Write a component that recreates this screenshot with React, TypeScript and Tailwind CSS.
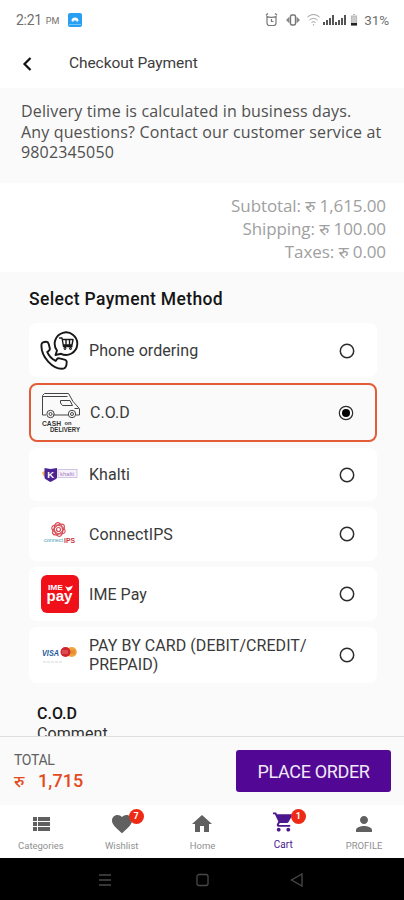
import type { ReactNode } from "react"
import clsx from "clsx"

const TOTALS = ["Subtotal: रु 1,615.00", "Shipping: रु 100.00", "Taxes: रु 0.00"]

function PhoneLogo() {
  return (
    <svg className="shrink-0" width="40" height="40" viewBox="0 0 40 40" fill="none" stroke="#181818" strokeWidth="1.9" strokeLinejoin="round" strokeLinecap="round">
      <path d="M1.500 13.500c0-2 2.500-2.800 5-2.700 1.200 0 1.800.8 2.200 2.200l1.100 4.300c.3 1.300-.3 2-1.200 2.600l-1.400 1c1.600 4 4.500 7 8.500 9l1.200-1.700c.7-.9 1.500-1.200 2.600-.9l5 1.300c1.500.4 2.200 1.200 2.200 2.500 0 2.800-.9 6-3.200 6.500C13 39 .5 25.500 1.500 13.500z" />
      <path d="M17 19.500 15.500 24l5.500-1.200A11.300 11.300 0 1 0 17 19.500z" />
      <path d="M19.500 7H22l1.500 8.500h8.500M22.500 8.500H33l-1 5.500h-8.500M26 8.500V14M29.500 8.500V14" strokeWidth="1.400" />
      <circle cx="25" cy="17.500" r=".5" />
      <circle cx="30.500" cy="17.500" r=".5" />
    </svg>
  )
}

function TruckLogo() {
  return (
    <svg className="shrink-0" width="42" height="42" viewBox="0 0 42 42" fill="none" stroke="#444" strokeWidth="1">
      <path d="M6 23H2.500V3.500L4.500 1.500h24L33 9.500l5 5.500 1.500 2v6H36M13 23h15.500M2.500 4.500h25" />
      <path d="M20.500 8.500h9.500l2.500 5H22.500l-2-2.500zM34.500 16.500h4" />
      <circle cx="10.500" cy="22" r="3.700" />
      <circle cx="10.500" cy="22" r="1.500" />
      <circle cx="32" cy="22" r="3.700" />
      <circle cx="32" cy="22" r="1.500" />
      <g fill="#333" stroke="none" fontFamily="Liberation Sans, sans-serif" fontWeight="700">
        <text x="2" y="33.500" fontSize="7" textLength="19" lengthAdjust="spacingAndGlyphs">CASH</text>
        <text x="24.500" y="33" fontSize="5" textLength="7" lengthAdjust="spacingAndGlyphs">on</text>
        <text x="10" y="40" fontSize="7" textLength="30" lengthAdjust="spacingAndGlyphs">DELIVERY</text>
      </g>
    </svg>
  )
}

function KhaltiLogo() {
  return (
    <svg className="shrink-0" width="38" height="16" viewBox="0 0 38 16">
      <path d="M1 5.500 5 3v7L2.500 9z" fill="#f5b04a" />
      <path d="M3.500 1 9.500 2l6.500-1v9.500c0 1.500-4 3-6.500 4.500-2.500-1.500-6-3-6-4.500z" fill="#4c2496" />
      <text x="6.200" y="10.500" fontSize="9.500" fontWeight="700" fill="#fff" fontFamily="Liberation Sans, sans-serif">K</text>
      <rect x="17" y="2.500" width="19" height="8" fill="#f7f2fb" stroke="#c9b6dc" strokeWidth=".8" />
      <text x="19" y="9" fontSize="6" fill="#a283c3" textLength="14" fontFamily="Liberation Sans, sans-serif">khalti</text>
    </svg>
  )
}

function ConnectIpsLogo() {
  return (
    <svg className="mb-[2px] shrink-0" width="34" height="22" viewBox="0 0 34 22" fill="none">
      <g stroke="#d8515b" strokeWidth="1.200">
        <ellipse cx="15.500" cy="7.500" rx="7" ry="4" transform="rotate(20 15.500 7.500)" />
        <ellipse cx="15.500" cy="7.500" rx="7" ry="4" transform="rotate(80 15.500 7.500)" />
        <ellipse cx="15.500" cy="7.500" rx="7" ry="4" transform="rotate(140 15.500 7.500)" />
        <circle cx="15.500" cy="7.500" r="2" />
      </g>
      <text x="1" y="20" fontSize="5" fill="#4e9dbb" textLength="19" lengthAdjust="spacingAndGlyphs" fontFamily="Liberation Sans, sans-serif">connect</text>
      <text x="21" y="20.500" fontSize="7.500" fontWeight="700" fill="#c9343f" textLength="11" lengthAdjust="spacingAndGlyphs" fontFamily="Liberation Sans, sans-serif">IPS</text>
    </svg>
  )
}

function ImeLogo() {
  return (
    <svg className="shrink-0" width="38" height="38" viewBox="0 0 38 38">
      <rect width="38" height="38" rx="6" fill="#ef1019" />
      <g fill="#fff" fontFamily="Liberation Sans, sans-serif" fontWeight="700">
        <text x="7" y="14.500" fontSize="7" textLength="15" lengthAdjust="spacingAndGlyphs">IME</text>
        <text x="5.500" y="26" fontSize="14" textLength="26" lengthAdjust="spacingAndGlyphs">pay</text>
      </g>
      <path d="m24 11 3 1.500 5-2-2 4-3 2z" fill="#fff" />
    </svg>
  )
}

function CardLogo() {
  return (
    <svg className="shrink-0" width="36" height="20" viewBox="0 0 36 20">
      <text x="0" y="10.500" fontSize="8.500" fontStyle="italic" fontWeight="700" fill="#245a99" textLength="17" lengthAdjust="spacingAndGlyphs" fontFamily="Liberation Sans, sans-serif">VISA</text>
      <circle cx="29.800" cy="7" r="5" fill="#f0a43c" />
      <circle cx="23.500" cy="7" r="5" fill="#d1232e" />
      <path d="M20 6h6M20 8h6" stroke="#ef9b93" strokeWidth=".7" />
      <path d="M28 6h5M28 8h5" stroke="#d95c2b" strokeWidth=".7" />
      <path d="M1 17h20" stroke="#d5d5d5" strokeDasharray="3 1" />
    </svg>
  )
}

function Radio({ checked }: { checked?: boolean }) {
  return (
    <svg width="16" height="16" viewBox="0 0 16 16" fill="none" stroke="#2b2b2b">
      <circle cx="8" cy="8" r="6.700" strokeWidth={checked ? 1.2 : 1.5} />
      {checked && <circle cx="8" cy="8" r="4" fill="#000" stroke="none" />}
    </svg>
  )
}

type Method = { label: string; logo: ReactNode; height: string; pad?: string; selected?: boolean }

const METHODS: Method[] = [
  { label: "Phone ordering", logo: <PhoneLogo />, height: "h-[54px]", pad: "pt-[1px]" },
  { label: "C.O.D", logo: <TruckLogo />, height: "h-[59px]", selected: true },
  { label: "Khalti", logo: <KhaltiLogo />, height: "h-[53px]" },
  { label: "ConnectIPS", logo: <ConnectIpsLogo />, height: "h-[54px]" },
  { label: "IME Pay", logo: <ImeLogo />, height: "h-[54px]" },
  { label: "PAY BY CARD (DEBIT/CREDIT/\nPREPAID)", logo: <CardLogo />, height: "h-[56px]" },
]

function MethodRow({ label, logo, height, pad, selected }: Method) {
  return (
    <div
      className={clsx(
        "flex shrink-0 items-center rounded-lg",
        height,
        pad,
        selected ? "border-2 border-[#e45c37] bg-[#fafafa] pr-[21px] pl-[10px]" : "bg-white pr-[22px] pl-[11px]"
      )}
    >
      <span className="flex w-10 shrink-0 items-center justify-center">{logo}</span>
      <span className="pl-[9px] text-[16px] leading-[19px] tracking-[0.06px] whitespace-pre-line text-[#3a3a3a]">{label}</span>
      <span className="ml-auto">
        <Radio checked={selected} />
      </span>
    </div>
  )
}

const NAV = [
  { label: "Categories", d: "M4 14h4v-4H4v4zm0 5h4v-4H4v4zM4 9h4V5H4v4zm5 5h12v-4H9v4zm0 5h12v-4H9v4zM9 5v4h12V5H9z" },
  { label: "Wishlist", badge: "7", d: "M12 21.350l-1.450-1.320C5.400 15.360 2 12.280 2 8.500 2 5.420 4.420 3 7.500 3c1.740 0 3.410.81 4.500 2.090C13.090 3.810 14.760 3 16.500 3 19.580 3 22 5.420 22 8.500c0 3.780-3.400 6.860-8.550 11.540L12 21.350z" },
  { label: "Home", d: "M10 20v-6h4v6h5v-8h3L12 3 2 12h3v8z" },
  { label: "Cart", badge: "1", active: true, d: "M7 18c-1.100 0-1.990.9-1.990 2S5.900 22 7 22s2-.9 2-2-.9-2-2-2zM1 2v2h2l3.600 7.590-1.350 2.450c-.16.28-.25.61-.25.960 0 1.100.9 2 2 2h12v-2H7.420c-.14 0-.25-.11-.25-.25l.03-.12.9-1.630h7.450c.75 0 1.410-.41 1.750-1.030l3.580-6.490A1 1 0 0 0 20 4H5.210l-.94-2H1zm16 16c-1.100 0-1.990.9-1.990 2s.89 2 1.990 2 2-.9 2-2-.9-2-2-2z" },
  { label: "PROFILE", d: "M12 12c2.210 0 4-1.790 4-4s-1.790-4-4-4-4 1.790-4 4 1.790 4 4 4zm0 2c-2.670 0-8 1.340-8 4v2h16v-2c0-2.660-5.330-4-8-4z" },
]

function StatusIcons() {
  return (
    <svg width="96" height="16" viewBox="0 0 96 16" fill="none" stroke="#777" strokeWidth="1.200">
      {/* alarm */}
      <path d="M2 4.500c1 1.200 7.500 1.200 9 0v6.500c0 1.500-1 2.500-2.500 2.500h-4C3 13.500 2 12.500 2 11zM1 3l2-1.500M12 3l-2-1.500M6.500 7v2.500h2" />
      {/* vibrate */}
      <rect x="25.500" y="3" width="5" height="10" rx="1.500" strokeWidth="1.400" />
      <path d="m24.500 4.500-3.500 3.500 3.500 3.500zM31.500 4.500l3.500 3.500-3.500 3.500z" fill="#888" stroke="none" />
      {/* wifi */}
      <path d="M42.500 5c4-3.200 8-3.200 12 0M44.500 8c2.500-2 5.500-2 8 0M46.500 10.500c1.500-1 2.500-1 4 0" stroke="#999" strokeWidth="1" />
      <circle cx="48.500" cy="12.800" r=".6" fill="#777" stroke="none" />
      {/* both sims */}
      <path d="M59 13v-3M62 13V8M65 13V6M68 13V3M71 13v-3M74 13V8M77 13V6M80 13V3" stroke="#555" strokeWidth="2" />
      <path d="M86.500 4h5v9h-5zM88 2.500h2" fill="#ccc" stroke="#bbb" />
      <path d="M86 11h6v2.500h-6z" fill="#222" stroke="none" />
    </svg>
  )
}

export default function App() {
  return (
    <div className="flex h-[900px] w-[404px] flex-col overflow-hidden bg-[#fafafa] font-[Roboto,sans-serif] text-[#333]">
      <div className="flex h-10 shrink-0 items-center bg-white pl-4 pr-[15px] text-[#707070]">
        <span className="text-[14px] tracking-[-0.3px]">2:21</span>
        <span className="ml-[4px] pt-[3px] text-[9px]">PM</span>
        <svg className="ml-[9px]" width="14" height="14" viewBox="0 0 14 14">
          <rect width="14" height="14" rx="2" fill="#279ff2" />
          <path d="M3.500 8a3.500 3.500 0 0 1 7 0l-2 1V7.500h-3V9z" fill="#fff" />
          <path d="M1 11.500h12" stroke="#70c5fb" />
        </svg>
        <span className="ml-auto flex items-center">
          <StatusIcons />
          <span className="ml-[3px] text-[13.500px] tracking-[-0.1px]">31%</span>
        </span>
      </div>

      <header className="flex h-12 shrink-0 items-center bg-white pl-[22px]">
        <svg width="10" height="14" viewBox="0 0 10 14" fill="none" stroke="#111" strokeWidth="2.200">
          <path d="M8.500 1 2.500 7l6 6" />
        </svg>
        <h1 className="ml-[37px] text-[15.500px] tracking-[-0.080px] text-[#3d3d3d]">Checkout Payment</h1>
      </header>

      <p className="h-[95px] shrink-0 pt-[13px] pl-[21px] font-['Open_Sans',sans-serif] text-[16px] leading-[20.5px] tracking-[0.15px] text-[#505050]">
        Delivery time is calculated in business days.
        <br />
        Any questions? Contact our customer service at
        <br />
        9802345050
      </p>

      <div className="flex h-[89px] shrink-0 flex-col items-end bg-white pt-[11px] pr-[18px] font-['Open_Sans','Noto_Sans',sans-serif] text-[17px] leading-[23px] tracking-[-0.1px] text-[#a0a0a0]">
        {TOTALS.map(line => (
          <span key={line}>{line}</span>
        ))}
      </div>

      <section className="flex min-h-0 flex-1 flex-col overflow-hidden pr-[27px] pl-[29px]">
        <h2 className="h-[51px] shrink-0 pt-[15px] text-[17.5px] leading-6 font-medium tracking-[0.35px] text-[#151515]">
          Select Payment Method
        </h2>
        <div className="flex shrink-0 flex-col gap-[6px]">
          {METHODS.map(method => (
            <MethodRow key={method.label} {...method} />
          ))}
        </div>
        <div className="shrink-0 pt-5 pl-2">
          <h3 className="text-[16px] leading-[21px] font-medium text-[#151515]">C.O.D</h3>
          <p className="text-[16px] leading-5 tracking-[0.1px]">Comment</p>
        </div>
      </section>

      <div className="flex h-[69px] shrink-0 items-start border-t border-[#dedede] pr-[13px] pl-[14px]">
        <div className="pt-[13px]">
          <div className="text-[14px] leading-5 tracking-[-0.3px] text-[#606060]">TOTAL</div>
          <div className="flex text-[18px] leading-[22px] font-medium tracking-[0.1px] text-[#e44a1c]">
            <span className="w-[24px] font-['Noto_Sans',sans-serif] text-[17px]">रु</span>
            1,715
          </div>
        </div>
        <button className="mt-[13px] ml-auto h-[42px] w-[155px] rounded-[3px] bg-[#520894] text-[18px] tracking-[-0.350px] text-[#f1e8f8]">
          PLACE ORDER
        </button>
      </div>

      <nav className="grid h-[53px] shrink-0 grid-cols-5 bg-white">
        {NAV.map(item => (
          <div
            key={item.label}
            className={clsx("flex flex-col items-center pl-px", item.active ? "pt-[5px] text-[#4b168e]" : "pt-[7px] text-[#606060]")}
          >
            <div className="relative">
              <svg width={item.active ? 23 : 24} height="24" viewBox="0 0 24 24" fill="currentColor">
                <path d={item.d} />
              </svg>
              {item.badge && (
                <span
                  className={clsx(
                    "absolute left-[19px] flex size-[15px] items-center justify-center rounded-full bg-[#ee2a16] text-[9px] font-bold text-white",
                    item.active ? "-top-[1px]" : "-top-[3px]"
                  )}
                >
                  {item.badge}
                </span>
              )}
            </div>
            <span
              className={clsx(
                "leading-[18px]",
                item.active ? "mt-[2px] text-[10px] text-[#4b168e]" : "mt-px text-[9.5px] text-[#909090]"
              )}
            >
              {item.label}
            </span>
          </div>
        ))}
      </nav>

      <div className="flex h-[42px] shrink-0 items-center bg-black pt-[2px] pl-[98px]">
        <svg width="208" height="14" viewBox="0 0 208 14" fill="none" stroke="#484848" strokeWidth="1.300">
          <path d="M1 2h12M1 7h12M1 12h12" />
          <rect x="99" y="1.500" width="11" height="11" rx="2" />
          <path d="M204 1v12l-10.500-6z" />
        </svg>
      </div>
    </div>
  )
}
